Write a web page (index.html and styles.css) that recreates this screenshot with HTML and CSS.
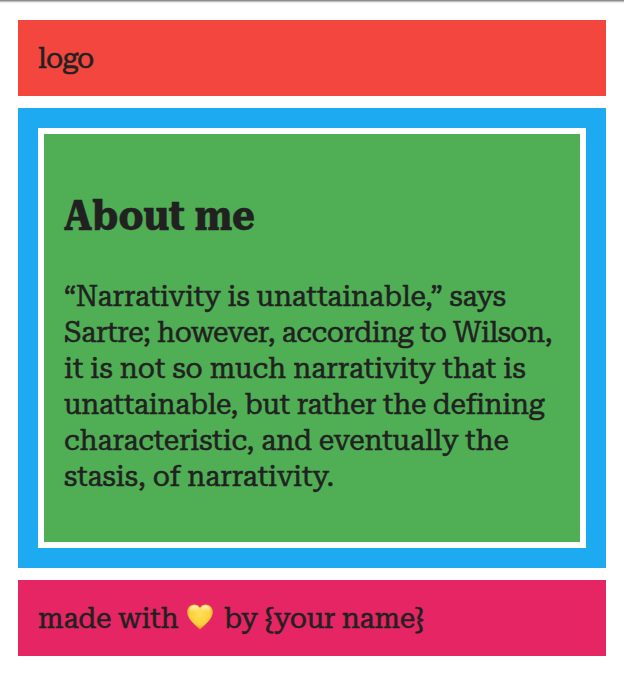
FILE: index.html
```html
<!DOCTYPE html>
<html lang="en">
<head>
<meta charset="utf-8">
<title>About me</title>
<link rel="stylesheet" href="styles.css">
</head>
<body>
<header class="header">logo</header>
<main class="main">
<article class="about">
<h1 class="title">About me</h1>
<p class="text"><span class="line l1">“Narrativity is unattainable,” says</span> <span class="line l2">Sartre; however, according to Wilson,</span> <span class="line l3">it is not so much narrativity that is</span> <span class="line l4">unattainable, but rather the defining</span> <span class="line l5">characteristic, and eventually the</span> <span class="line l6">stasis, of narrativity.</span></p>
</article>
</main>
<footer class="footer"><span class="made">made with</span><svg class="heart" viewBox="0 0 26 26" role="img" aria-label="yellow heart"><defs><radialGradient id="gold" cx="50%" cy="40%" r="62%"><stop offset="0" stop-color="#ffdf55"/><stop offset=".65" stop-color="#fcce3a"/><stop offset="1" stop-color="#e99414"/></radialGradient><linearGradient id="shine" x1="0" y1="0" x2="0" y2="1"><stop offset="0" stop-color="#fffbd6"/><stop offset="1" stop-color="#ffe36c" stop-opacity="0"/></linearGradient></defs><path fill="url(#gold)" d="M13 3.8C11.6 1.6 9.7.5 7.2.5 3.2.5.2 3.6.2 7.8c0 6.6 6.4 12 12.8 17.6C19.4 19.8 25.8 14.4 25.8 7.8c0-4.2-3-7.3-7-7.3-2.5 0-4.4 1.1-5.8 3.3z"/><path fill="url(#shine)" d="M2 7C2 3.6 4.4 1.4 7.3 1.4c2.7 0 4.6 1.7 5.7 4.2 1.1-2.5 3-4.2 5.7-4.2C21.6 1.4 24 3.6 24 7c-3 3.3-19 3.3-22 0z"/></svg><span class="by">by {your name}</span></footer>
</body>
</html>
```

FILE: styles.css
```css
* { box-sizing: border-box; }
body { margin: 0; padding: 20px 18px; font: 400 28px/36px "Roboto Slab", "Roboto Serif", serif; -webkit-text-stroke: 0.5px #212121; color: #212121; background: #fff linear-gradient(#8e8e8e 0 1px, #bcbcbc 1px 2px, #ededed 2px 3px, #fafafa 3px 4px, #fff 4px) top / 100% 5px no-repeat; }
.header { background: #f2463e; height: 76px; padding: 21px 20px 0; letter-spacing: -0.6px; }
.main { background: #1eaaf1; margin: 12px 0; padding: 20px; height: 460px; }
.about { background: #50ae55; border: 6px solid #fff; height: 420px; padding: 54px 20px 0; }
.title { margin: 0; font-size: 42px; line-height: 56px; font-weight: 700; white-space: nowrap; transform: scaleX(0.925); transform-origin: left; -webkit-text-stroke: 0.5px #212121; }
.text { margin: 35px 0 0; }
.line { display: block; white-space: nowrap; }
.l1 { letter-spacing: -0.15px; }
.l2 { letter-spacing: -0.44px; }
.l3 { letter-spacing: -0.03px; }
.l4 { letter-spacing: -0.31px; }
.l5 { letter-spacing: -0.16px; }
.l6 { letter-spacing: -0.08px; }
.footer { background: #e62564; height: 76px; padding: 21px 20px 0; display: flex; white-space: nowrap; }
.made { width: 149px; letter-spacing: -0.1px; }
.heart { width: 26px; height: 26px; margin-top: 3px; }
.by { margin-left: 11px; letter-spacing: -0.3px; }
```
